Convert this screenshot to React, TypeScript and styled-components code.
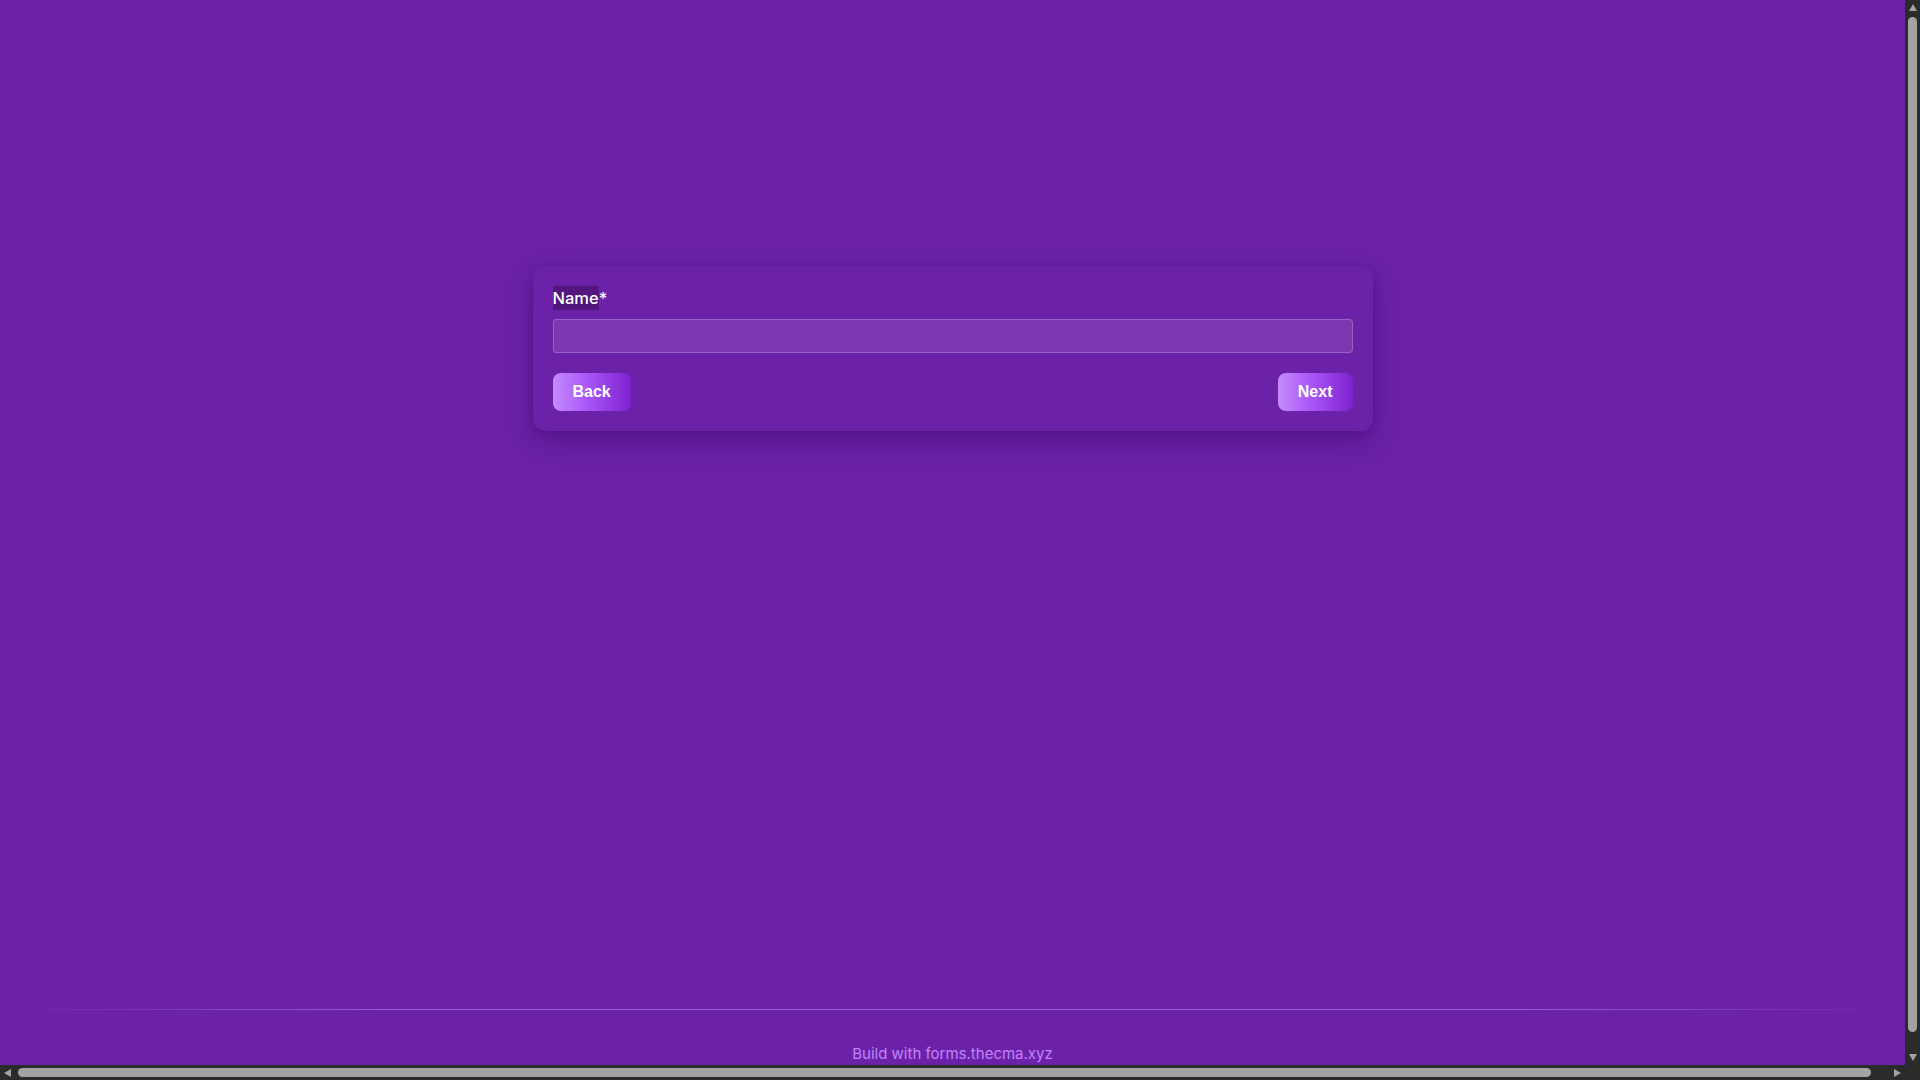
import React from "react";
import styled, { createGlobalStyle } from "styled-components";

const GlobalStyle = createGlobalStyle`
  body {
    margin: 0;
    background: #6b21a8;
    font-family: "Inter", "Open Sans", sans-serif;
    color: #ffffff;
  }
  * { box-sizing: border-box; }
`;

const Page = styled.div`
  min-height: 100vh;
  padding-right: 15px;
  display: flex;
  flex-direction: column;
  background: #6b21a8;
  overflow: hidden;
`;

const Main = styled.main`
  flex: 1;
  display: flex;
  justify-content: center;
  align-items: flex-start;
  padding-top: 266px;
`;

const Card = styled.form`
  width: 840px;
  padding: 20px;
  border-radius: 12px;
  background: #6b21a8;
  box-shadow: 0 10px 28px rgba(40, 0, 80, 0.35), 0 2px 6px rgba(40, 0, 80, 0.15);
  display: flex;
  flex-direction: column;
`;

const Label = styled.label`
  display: flex;
  align-items: center;
  height: 24px;
  margin-bottom: 9px;
  font-family: "Inter", "Open Sans", sans-serif;
  font-size: 16.5px;
  font-weight: 500;
  color: #ffffff;
`;

const Highlight = styled.span`
  background: #52167f;
  line-height: 24px;
`;

const Input = styled.input`
  width: 100%;
  height: 34px;
  padding: 0 10px;
  border-radius: 4px;
  border: 1px solid rgba(255, 255, 255, 0.22);
  background: rgba(255, 255, 255, 0.1);
  color: #ffffff;
  font-family: "Inter", sans-serif;
  font-size: 15px;
  outline: none;
`;

const Actions = styled.div`
  display: flex;
  justify-content: space-between;
  margin-top: 20px;
`;

const Button = styled.button`
  height: 38px;
  padding: 0 20px;
  border: none;
  border-radius: 8px;
  background: linear-gradient(90deg, #c58bfc 0%, #a855f7 45%, #7e22ce 100%);
  color: #ffffff;
  font-family: "Liberation Sans", Arial, sans-serif;
  font-weight: 700;
  font-size: 16px;
  cursor: pointer;
`;

const Footer = styled.footer`
  display: flex;
  flex-direction: column;
  align-items: center;
`;

const Divider = styled.div`
  align-self: stretch;
  height: 1px;
  background: linear-gradient(
    90deg,
    rgba(192, 132, 252, 0) 0%,
    rgba(192, 132, 252, 0.55) 20%,
    rgba(192, 132, 252, 0.55) 80%,
    rgba(192, 132, 252, 0) 100%
  );
`;

const Credit = styled.a`
  display: block;
  padding: 32px 0 14px;
  line-height: 24px;
  font-family: "Inter", "Open Sans", sans-serif;
  font-size: 15px;
  color: #c084fc;
  text-decoration: none;
`;

/* browser scrollbars, drawn over the viewport edges */
const VBar = styled.div`
  position: fixed;
  top: 0;
  right: 0;
  width: 15px;
  height: 1065px;
  background: #2b2b2b;
  display: flex;
  flex-direction: column;
  align-items: center;
  padding: 4px 0;
`;

const HBar = styled.div`
  position: fixed;
  left: 0;
  bottom: 0;
  width: 1905px;
  height: 15px;
  background: #2b2b2b;
  display: flex;
  align-items: center;
  padding: 0 4px;
`;

const Corner = styled.div`
  position: fixed;
  right: 0;
  bottom: 0;
  width: 15px;
  height: 15px;
  background: #2b2b2b;
`;

const Arrow = styled.span<{ $dir: "up" | "down" | "left" | "right" }>`
  width: 0;
  height: 0;
  flex: none;
  border-style: solid;
  border-color: transparent;
  ${({ $dir }) =>
    $dir === "up"
      ? "border-width: 0 4.5px 7px 4.5px; border-bottom-color: #a3a3a3;"
      : $dir === "down"
      ? "border-width: 7px 4.5px 0 4.5px; border-top-color: #a3a3a3;"
      : $dir === "left"
      ? "border-width: 4.5px 7px 4.5px 0; border-right-color: #a3a3a3;"
      : "border-width: 4.5px 0 4.5px 7px; border-left-color: #a3a3a3;"}
`;

const VThumb = styled.div`
  width: 9px;
  flex: 1;
  margin: 6px 0 22px;
  border-radius: 5px;
  background: #a3a3a3;
`;

const HThumb = styled.div`
  height: 9px;
  flex: 1;
  margin: 0 23px 0 7px;
  border-radius: 5px;
  background: #a3a3a3;
`;

export default function App() {
  return (
    <>
      <GlobalStyle />
      <Page>
        <Main>
          <Card onSubmit={(e) => e.preventDefault()}>
            <Label htmlFor="name">
              <Highlight>Name</Highlight>*
            </Label>
            <Input id="name" type="text" />
            <Actions>
              <Button type="button">Back</Button>
              <Button type="submit">Next</Button>
            </Actions>
          </Card>
        </Main>
        <Footer>
          <Divider />
          <Credit href="#">Build with forms.thecma.xyz</Credit>
        </Footer>
      </Page>
      <VBar>
        <Arrow $dir="up" />
        <VThumb />
        <Arrow $dir="down" />
      </VBar>
      <HBar>
        <Arrow $dir="left" />
        <HThumb />
        <Arrow $dir="right" />
      </HBar>
      <Corner />
    </>
  );
}
